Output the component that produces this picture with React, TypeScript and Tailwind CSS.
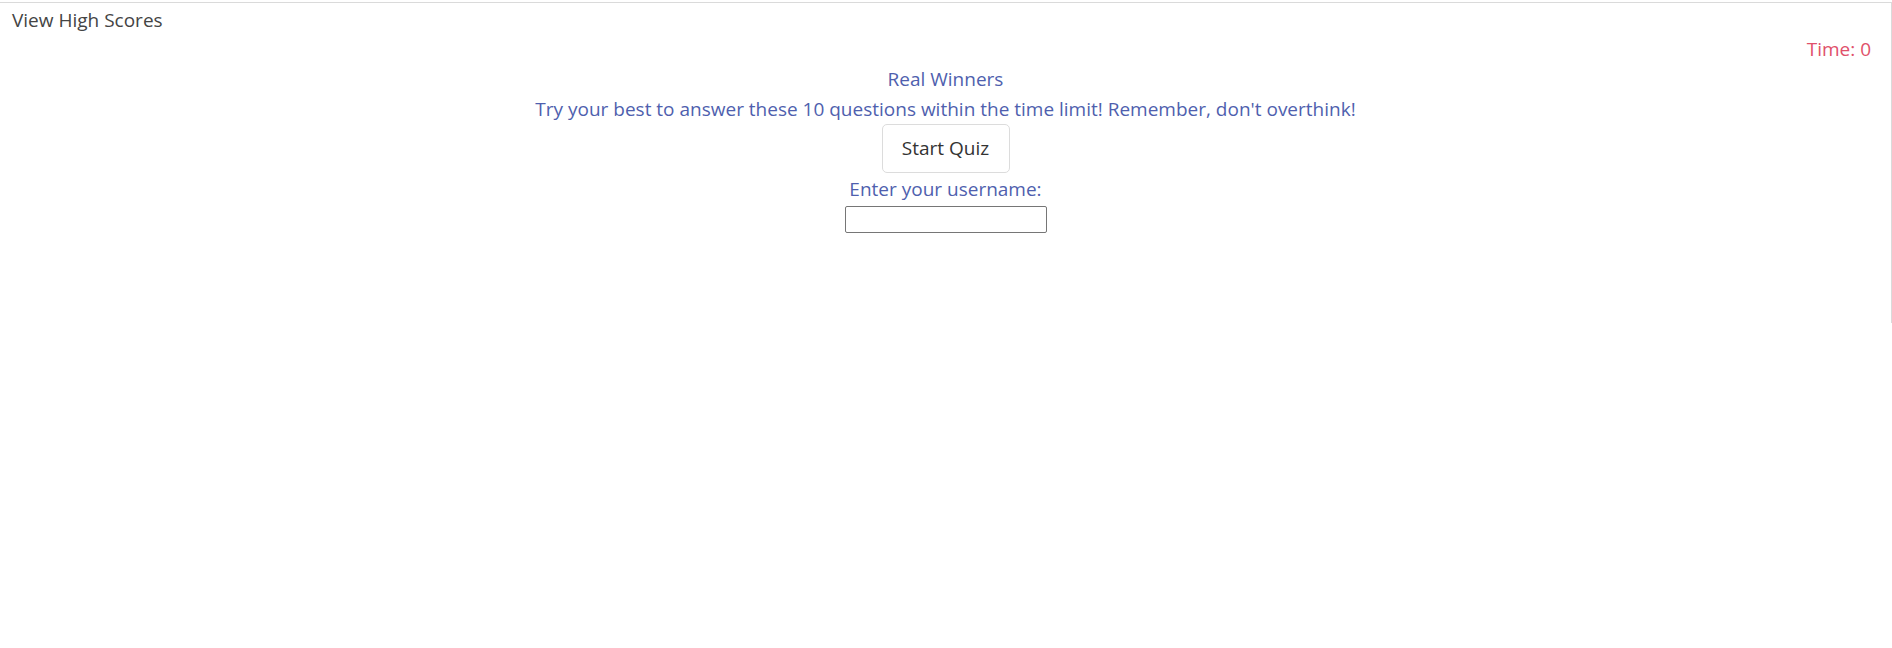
import React from "react";

export default function App() {
  return (
    <div className="w-[1892px] h-[648px] bg-white pt-[2px]" style={{ fontFamily: '"Open Sans", "Noto Sans", sans-serif' }}>
      <div className="h-[321px] border-t border-r border-[#dadada]">
        <div className="pl-[12px] pt-[4px] text-[19px] leading-[26px] text-[#444]">View High Scores</div>
        <div className="flex justify-end pr-[20px] pt-[3px] text-[19px] leading-[26px] text-[#e0506a]">Time: 0</div>
        <div className="flex flex-col items-center text-[#4f5fae] text-[19px]">
          <div className="leading-[30px] mt-[2px]">Real Winners</div>
          <div className="leading-[30px]">Try your best to answer these 10 questions within the time limit! Remember, don't overthink!</div>
          <button className="h-[49px] w-[128px] rounded-[5px] border border-[#dcdcdc] bg-white text-[#333] text-[19px]">Start Quiz</button>
          <div className="leading-[30px] mt-[1px]">Enter your username:</div>
          <input className="mt-[2px] h-[27px] w-[202px] rounded-[2px] border border-[#767676]" />
        </div>
      </div>
    </div>
  );
}
